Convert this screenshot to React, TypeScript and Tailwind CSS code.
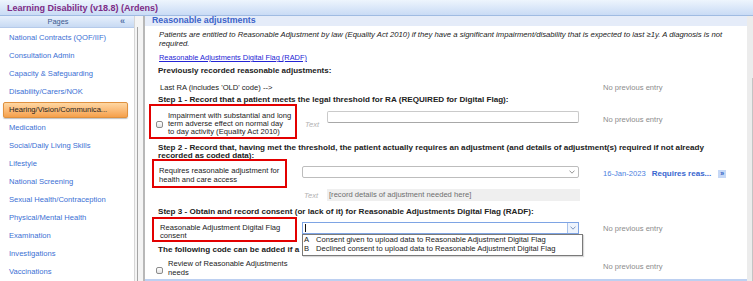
import React from 'react';

const navItems = [
  'National Contracts (QOF/IIF)',
  'Consultation Admin',
  'Capacity & Safeguarding',
  'Disability/Carers/NOK',
  'Hearing/Vision/Communica...',
  'Medication',
  'Social/Daily Living Skills',
  'Lifestyle',
  'National Screening',
  'Sexual Health/Contraception',
  'Physical/Mental Health',
  'Examination',
  'Investigations',
  'Vaccinations',
];

const activeItem = 'Hearing/Vision/Communica...';

const Chevron = ({ color = '#8a8a8a' }: { color?: string }) => (
  <svg width="6" height="4" viewBox="0 0 6 4">
    <path d="M0.5 0.6 L3 3.2 L5.5 0.6" stroke={color} strokeWidth="0.9" fill="none" />
  </svg>
);

const Checkbox = ({ className }: { className: string }) => (
  <span
    className={`block w-[7px] h-[7px] shrink-0 rounded-[2px] border border-[#8c8c8c] bg-linear-to-b from-white to-[#e4e4e4] ${className}`}
  />
);

const NoEntry = ({ className }: { className: string }) => (
  <div className={`leading-[9px] text-[#8c8c8c] whitespace-nowrap ${className}`}>
    No previous entry
  </div>
);

const Nav = () => (
  <div className="w-[135px] shrink-0 border-r border-[#d6d6d6] bg-white flex flex-col">
    <div className="h-[17px] flex items-center bg-linear-to-b from-[#e7f0fc] to-[#c8daf3] border-b border-[#b5caea]">
      <span className="w-[116px] text-center text-[7.4px] text-[#3b5a8e]">Pages</span>
      <span className="ml-[4px] text-[9px] font-bold leading-[9px] text-[#5674a9]">«</span>
    </div>
    <div className="pt-[1px]">
      {navItems.map((item) => {
        if (item === activeItem) {
          return (
            <div key={item} className="h-[18px] py-[1px] px-[3px]">
              <div className="h-[16px] w-[125px] rounded-[2px] border border-[#df913f] bg-linear-to-b from-[#fed7a2] to-[#f5a04a] pl-[5px] leading-[14px] text-[#1e1e1e] shadow-[0_1px_1px_rgba(0,0,0,0.25)] whitespace-nowrap">
                {item}
              </div>
            </div>
          );
        }
        return (
          <div key={item} className="h-[18px] pl-[9px] leading-[18px] text-[#3b6fd4] whitespace-nowrap">
            {item}
          </div>
        );
      })}
    </div>
  </div>
);

const Main = () => (
  <div className="flex-1 flex flex-col bg-white border-l-2 border-[#b8b8b8]">
    <div className="h-[10px] bg-[#e5ecf9] pl-[7px] text-[8.8px] font-bold leading-[9px] text-[#3c63c9] whitespace-nowrap">
      Reasonable adjustments
    </div>

    <div className="mt-[4px] pl-[14px] italic text-[7.7px] leading-[9px] whitespace-nowrap">
      Patients are entitled to Reasonable Adjustment by law (Equality Act 2010) if they have a significant
      impairment/disability that is expected to last ≥1y. A diagnosis is not
      <br />
      required.
    </div>

    <div className="mt-[5px] h-[9px] pl-[14px] leading-[9px] text-[7.4px]">
      <span className="text-[#2424d4] underline">Reasonable Adjustments Digital Flag (RADF)</span>
    </div>

    <div className="mt-[4px] h-[9px] pl-[13px] leading-[9px] text-[8px] font-bold whitespace-nowrap">
      Previously recorded reasonable adjustments:
    </div>

    <div className="mt-[8px] h-[9px] grid grid-cols-[458px_1fr]">
      <div className="pl-[15px] leading-[9px] whitespace-nowrap">Last RA (includes 'OLD' code) --&gt;</div>
      <NoEntry className="" />
    </div>

    <div className="mt-[4px] h-[8px] pl-[13px] leading-[8px] text-[8.1px] font-bold whitespace-nowrap">
      Step 1 - Record that a patient meets the legal threshold for RA (REQUIRED for Digital Flag):
    </div>

    <div className="h-[35px] grid grid-cols-[157px_278px_1fr]">
      <div className="pl-[4px]">
        <div className="h-[35px] w-[148px] border-2 border-[#e30000] flex items-start">
          <Checkbox className="ml-[5px] mt-[15px]" />
          <div className="ml-[5px] mt-[5.5px] leading-[8.3px] whitespace-nowrap">
            Impairment with substantial and long
            <br />
            term adverse effect on normal day
            <br />
            to day activity (Equality Act 2010)
          </div>
        </div>
      </div>
      <div className="flex items-start">
        <span className="ml-[3px] mt-[15.5px] leading-[9px] italic text-[#b2b2b2]">Text</span>
        <div className="ml-auto mr-[1px] mt-[7px] h-[12px] w-[252px] rounded-[2px] border border-[#cacaca] border-b-[#a8a8a8] bg-white" />
      </div>
      <NoEntry className="pl-[23px] pt-[10.5px]" />
    </div>

    <div className="mt-[5px] h-[15px] pl-[13px] leading-[8px] text-[8.1px] font-bold whitespace-nowrap">
      Step 2 - Record that, having met the threshold, the patient actually requires an adjustment (and details of
      adjustment(s) required if not already
      <br />
      recorded as coded data):
    </div>

    <div className="h-[29px] grid grid-cols-[157px_278px_1fr]">
      <div className="pl-[7px]">
        <div className="h-[29px] w-[135px] border-2 border-[#e30000] pl-[5px] pt-[6px] leading-[8.5px] whitespace-nowrap">
          Requires reasonable adjustment for
          <br />
          health and care access
        </div>
      </div>
      <div>
        <div className="mt-[7px] h-[12px] w-[277px] rounded-[2px] border border-[#bdbdbd] bg-white flex items-center justify-end pr-[3px]">
          <Chevron />
        </div>
      </div>
      <div className="pl-[23px] flex items-center whitespace-nowrap">
        <span className="text-[#4b7fe0]">16-Jan-2023</span>
        <span className="ml-[6px] text-[8px] font-bold text-[#3866cf]">Requires reas...</span>
        <span className="ml-[7px] w-[8px] h-[8px] bg-[#c6d8f6] text-[7px] font-bold leading-[7px] text-center text-[#2f5fc4]">
          »
        </span>
      </div>
    </div>

    <div className="h-[13px] grid grid-cols-[157px_278px_1fr]">
      <div />
      <div className="flex items-start">
        <span className="ml-[2px] mt-[2.5px] leading-[9px] italic text-[#b2b2b2]">Text</span>
        <div className="ml-auto mt-[1px] h-[12px] w-[253px] bg-[#efefef] pl-[2px] leading-[12px] text-[#6e6e6e] whitespace-nowrap">
          [record details of adjustment needed here]
        </div>
      </div>
      <div />
    </div>

    <div className="mt-[6px] h-[9px] pl-[13px] leading-[9px] text-[8.1px] font-bold whitespace-nowrap">
      Step 3 - Obtain and record consent (or lack of it) for Reasonable Adjustments Digital Flag (RADF):
    </div>

    <div className="mt-[1px] h-[25px] grid grid-cols-[157px_278px_1fr]">
      <div className="pl-[7px]">
        <div className="h-[25px] w-[145px] border-2 border-[#e30000] pl-[6px] pt-[4.7px] leading-[8px] whitespace-nowrap">
          Reasonable Adjustment Digital Flag
          <br />
          consent
        </div>
      </div>
      <div className="relative">
        <div className="mt-[5px] h-[12px] w-[277px] border border-[#7ea4e4] bg-white flex items-stretch">
          <span className="ml-[2px] w-px h-[8px] self-center bg-[#111]" />
          <span className="ml-auto w-[11px] border-l border-[#a9c2ea] bg-[#eef4fd] flex items-center justify-center">
            <Chevron color="#6f8bb8" />
          </span>
        </div>
        <div className="absolute left-0 top-[17px] z-10 w-[281px] border border-[#7a7a7a] bg-white pb-[2px] shadow-[1px_1px_1px_rgba(0,0,0,0.15)]">
          <div className="flex h-[9px] leading-[9px] whitespace-nowrap">
            <span className="w-[13px] pl-[1px]">A</span>
            <span>Consent given to upload data to Reasonable Adjustment Digital Flag</span>
          </div>
          <div className="flex h-[9px] leading-[9px] whitespace-nowrap">
            <span className="w-[13px] pl-[1px]">B</span>
            <span>Declined consent to upload data to Reasonable Adjustment Digital Flag</span>
          </div>
        </div>
      </div>
      <NoEntry className="pl-[23px] pt-[7px]" />
    </div>

    <div className="mt-[3px] h-[9px] pl-[13px] leading-[9px] text-[8.1px] font-bold whitespace-nowrap">
      The following code can be added if a
    </div>

    <div className="mt-[6px] h-[17px] grid grid-cols-[157px_278px_1fr]">
      <div className="pl-[11px] flex items-start">
        <Checkbox className="mt-[7px]" />
        <div className="ml-[5px] leading-[8.5px] whitespace-nowrap">
          Review of Reasonable Adjustments
          <br />
          needs
        </div>
      </div>
      <div />
      <NoEntry className="pl-[23px] pt-[1.5px]" />
    </div>

    <div className="mt-auto h-[2px] bg-[#bdd0f1]" />
  </div>
);

export default function App() {
  return (
    <div className="w-[753px] h-[281px] overflow-hidden bg-white font-['Liberation_Sans',Arial,sans-serif] text-[7.6px] text-[#222]">
      <div className="h-[16px] border-b border-[#9fbbe2] bg-linear-to-b from-[#eef5fd] to-[#c9dbf5] pl-[7px] pt-[1px] text-[9px] font-bold leading-[14px] text-[#7d2b86] whitespace-nowrap">
        Learning Disability (v18.8) (Ardens)
      </div>
      <div className="flex h-[265px]">
        <Nav />
        <div className="w-[8px] shrink-0 bg-[#f4f4f4] pt-[11px] pl-[2px]">
          <div className="w-px h-full bg-[#a5a5a5]" />
        </div>
        <Main />
        <div className="w-[6px] shrink-0 bg-[#ececec] flex justify-end pt-[62px]">
          <div className="w-px h-full bg-[#c4c4c4]" />
        </div>
      </div>
    </div>
  );
}
